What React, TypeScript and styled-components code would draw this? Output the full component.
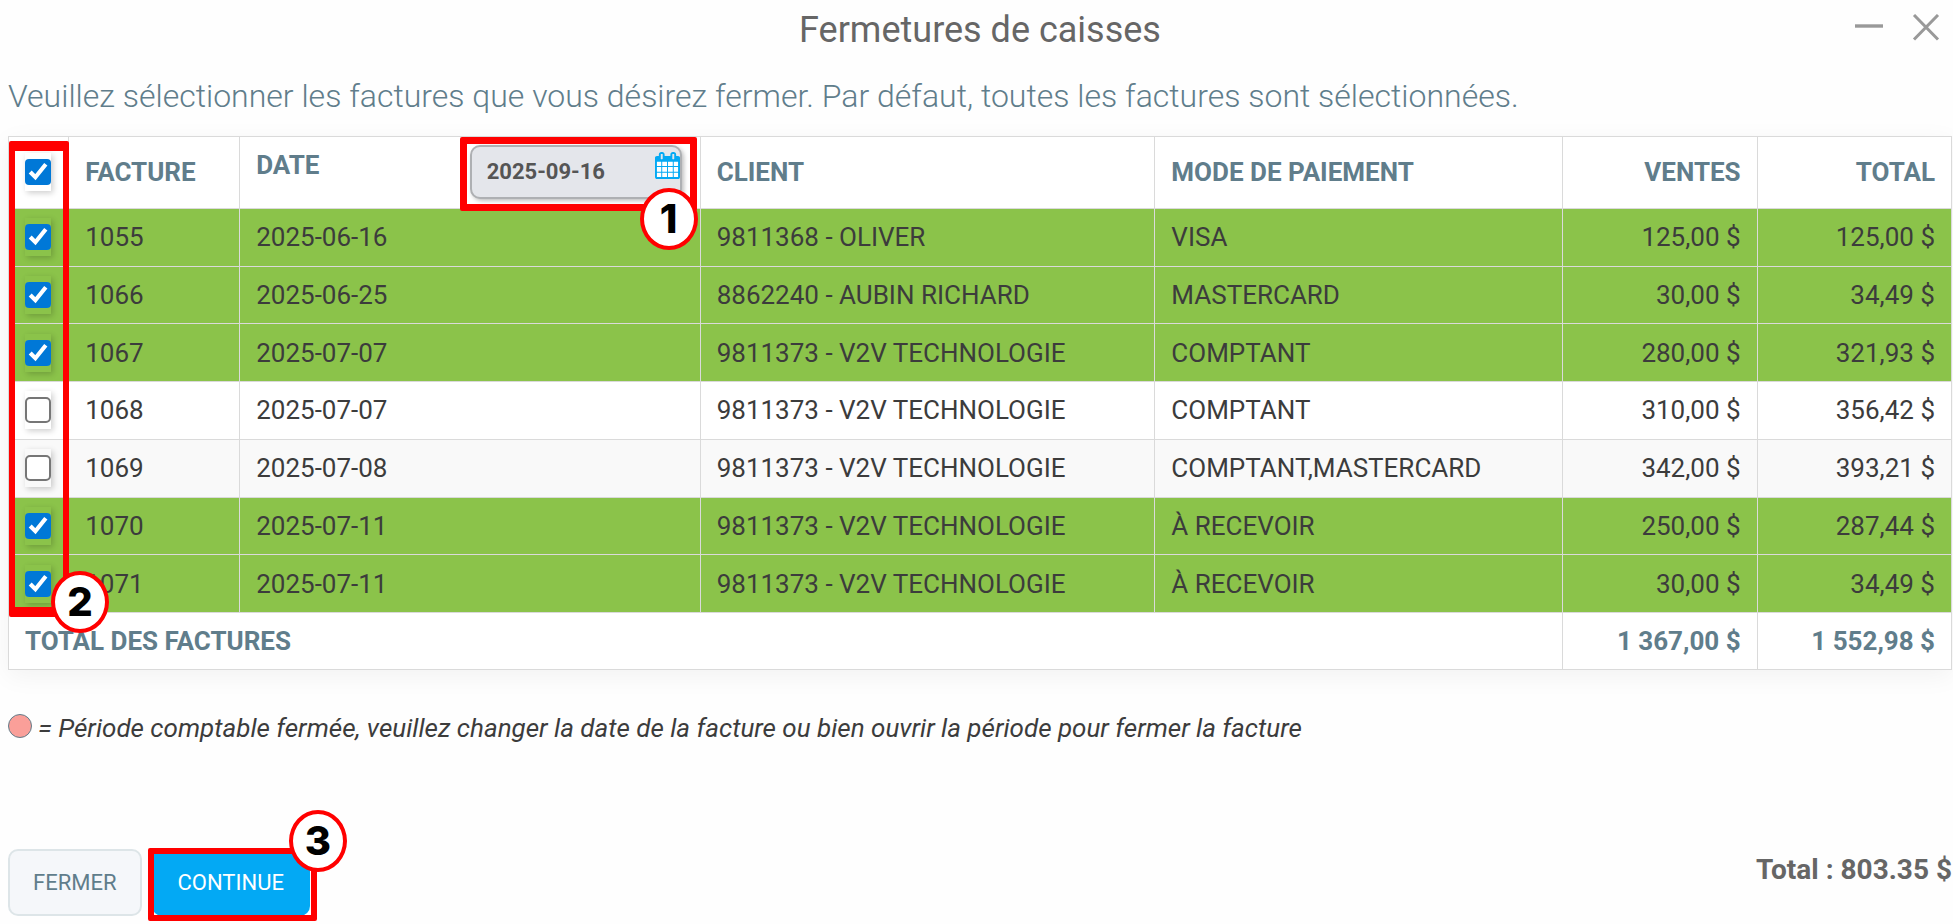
import React, { useState } from 'react';
import styled, { createGlobalStyle } from 'styled-components';

const GlobalStyle = createGlobalStyle`
  *, *::before, *::after { box-sizing: border-box; }
  body {
    margin: 0;
    background: #fefefe;
    color: #3c3c3c;
    font-family: Roboto, "Liberation Sans", sans-serif;
    font-size: 26px;
    line-height: 32px;
  }
  button, input { font-family: inherit; }
`;

const Dialog = styled.main`
  padding: 0 1px 6px 8px;
`;

const TitleBar = styled.header`
  display: grid;
  grid-template-columns: 1fr auto 1fr;
  align-items: center;
  height: 56px;
`;

const Title = styled.h1`
  grid-column: 2;
  margin: 0;
  padding-top: 4px;
  font-size: 36px;
  font-weight: 400;
  line-height: 48px;
  color: #666;
`;

const WindowActions = styled.div`
  display: flex;
  justify-content: flex-end;
  gap: 24px;
  padding-right: 7px;
`;

const IconButton = styled.button`
  display: flex;
  padding: 0;
  border: 0;
  background: none;
  color: #999;
  cursor: pointer;
`;

const Intro = styled.p`
  margin: 16px 0;
  font-size: 32px;
  font-weight: 300;
  line-height: 48px;
  color: #607d8b;
`;

const TableArea = styled.div`
  position: relative;
  box-shadow: 0 6px 24px rgba(0, 0, 0, 0.05);
`;

const Table = styled.table`
  width: 100%;
  height: 534px;
  table-layout: fixed;
  border-collapse: collapse;
  background: #fff;
  border: 1px solid #dfe8ee;
`;

const Col = styled.col<{ $width: string }>`
  width: ${(p) => p.$width};
`;

const Row = styled.tr<{ $tone?: 'selected' | 'striped' }>`
  height: 57px;
  background: ${(p) =>
    p.$tone === 'selected' ? '#8bc34a' : p.$tone === 'striped' ? '#f9f9f9' : '#fff'};
`;

const HeadRow = styled.tr`
  height: 72px;

  && > th {
    padding-bottom: 2px;
  }
`;

const Cell = styled.td<{ $align?: 'right' | 'center' }>`
  padding: 0 16px;
  border: 1px solid #dadada;
  text-align: ${(p) => p.$align ?? 'left'};
  white-space: nowrap;
`;

const CheckCell = styled(Cell)`
  padding: 0 2px 0 0;
  line-height: 0;
`;

const HeadCell = styled(Cell)`
  font-weight: 700;
  color: #607d8b;
`;

const DateHead = styled.div`
  display: flex;
  align-items: flex-start;
  justify-content: space-between;
  padding-right: 2px;
`;

const DateLabel = styled.label`
  padding-top: 4px;
`;

const DatePicker = styled.div`
  position: relative;
  width: 212px;
`;

const DateInput = styled.input`
  display: block;
  width: 100%;
  height: 54px;
  padding: 0 15px;
  border: 2px solid #aeb0b3;
  border-radius: 10px;
  background: #e4e6eb;
  box-shadow: 2px 2px 4px rgba(0, 0, 0, 0.25);
  color: #555;
  font-size: 22px;
  font-weight: 700;
`;

const CalendarButton = styled(IconButton)`
  position: absolute;
  top: 7px;
  right: 2px;
  color: #03a9f4;
`;

const Tick = styled.input`
  width: 13px;
  height: 19px;
  margin: 0;
  zoom: 2;
  accent-color: #0078d7;
  box-shadow: 1px 1px 3px rgba(0, 0, 0, 0.2);
`;

const Marker = styled.div<{ $inset: string; $border: string; $width?: string }>`
  position: absolute;
  inset: ${(p) => p.$inset};
  width: ${(p) => p.$width ?? 'auto'};
  border: solid #f00;
  border-width: ${(p) => p.$border};
  border-radius: 2px;
  pointer-events: none;
`;

const Badge = styled.span<{ $inset: string }>`
  position: absolute;
  inset: ${(p) => p.$inset};
  display: flex;
  align-items: center;
  justify-content: center;
  width: 58px;
  height: 62px;
  border: 4px solid #f00;
  border-radius: 50%;
  background: #fff;
  color: #000;
  font-family: Inter, "Liberation Sans", sans-serif;
  font-size: 40px;
  font-weight: 800;
  line-height: 48px;
  pointer-events: none;
`;

const Legend = styled.p`
  display: flex;
  align-items: center;
  gap: 6px;
  margin: 42px 0 0;
  font-style: italic;
`;

const Dot = styled.span`
  width: 24px;
  height: 24px;
  margin-bottom: 4px;
  border: 1px solid #607d8b;
  border-radius: 50%;
  background: #fa9f99;
`;

const Footer = styled.footer`
  display: flex;
  align-items: center;
  justify-content: space-between;
  margin-top: 105px;
`;

const Actions = styled.div`
  display: flex;
  gap: 10px;
`;

const Highlighted = styled.div`
  position: relative;
`;

const Button = styled.button<{ $primary?: boolean }>`
  height: 67px;
  padding: 0 ${(p) => (p.$primary ? 26 : 23)}px;
  border: ${(p) => (p.$primary ? '0' : '2px solid #dde5e8')};
  border-radius: 10px;
  background: ${(p) => (p.$primary ? '#03a9f4' : '#f5f7fa')};
  color: ${(p) => (p.$primary ? '#fff' : '#607d8b')};
  font-size: 22px;
  cursor: pointer;
`;

const GrandTotal = styled.strong`
  margin-bottom: 26px;
  font-size: 28px;
  font-weight: 700;
  color: #666;
`;

const MinimizeIcon = () => (
  <svg width="28" height="28" viewBox="0 0 28 28" aria-hidden="true">
    <path d="M0 12H28" stroke="currentColor" strokeWidth="3.4" />
  </svg>
);

const CloseIcon = () => (
  <svg width="38" height="28" viewBox="0 0 38 28" aria-hidden="true">
    <path d="M7 1L31 25.5M31 1L7 25.5" stroke="currentColor" strokeWidth="3" />
  </svg>
);

const CalendarIcon = () => (
  <svg width="25" height="27" viewBox="0 0 1664 1792" fill="currentColor" aria-hidden="true">
    <path fill="#fff" d="M64 500h1536v1228h-1536z" />
    <path d="M128 1664h288v-288h-288v288zM480 1664h320v-288h-320v288zM128 1312h288v-320h-288v320zM480 1312h320v-320h-320v320zM128 928h288v-288h-288v288zM864 1664h320v-288h-320v288zM480 928h320v-288h-320v288zM1248 1664h288v-288h-288v288zM864 1312h320v-320h-320v320zM512 448v-288q0-13-9.5-22.5t-22.5-9.5h-64q-13 0-22.5 9.5t-9.5 22.5v288q0 13 9.5 22.5t22.5 9.5h64q13 0 22.5-9.5t9.5-22.5zM1248 1312h288v-320h-288v320zM864 928h320v-288h-320v288zM1248 928h288v-288h-288v288zM1280 448v-288q0-13-9.5-22.5t-22.5-9.5h-64q-13 0-22.5 9.5t-9.5 22.5v288q0 13 9.5 22.5t22.5 9.5h64q13 0 22.5-9.5t9.5-22.5zM1664 384v1280q0 52-38 90t-90 38h-1408q-52 0-90-38t-38-90v-1280q0-52 38-90t90-38h128v-96q0-66 47-113t113-47h64q66 0 113 47t47 113v96h384v-96q0-66 47-113t113-47h64q66 0 113 47t47 113v96h128q52 0 90 38t38 90z" />
  </svg>
);

const invoices = [
  { id: '1055', date: '2025-06-16', client: '9811368 - OLIVER', mode: 'VISA', sales: '125,00 $', total: '125,00 $' },
  { id: '1066', date: '2025-06-25', client: '8862240 - AUBIN RICHARD', mode: 'MASTERCARD', sales: '30,00 $', total: '34,49 $' },
  { id: '1067', date: '2025-07-07', client: '9811373 - V2V TECHNOLOGIE', mode: 'COMPTANT', sales: '280,00 $', total: '321,93 $' },
  { id: '1068', date: '2025-07-07', client: '9811373 - V2V TECHNOLOGIE', mode: 'COMPTANT', sales: '310,00 $', total: '356,42 $' },
  { id: '1069', date: '2025-07-08', client: '9811373 - V2V TECHNOLOGIE', mode: 'COMPTANT,MASTERCARD', sales: '342,00 $', total: '393,21 $' },
  { id: '1070', date: '2025-07-11', client: '9811373 - V2V TECHNOLOGIE', mode: 'À RECEVOIR', sales: '250,00 $', total: '287,44 $' },
  { id: '1071', date: '2025-07-11', client: '9811373 - V2V TECHNOLOGIE', mode: 'À RECEVOIR', sales: '30,00 $', total: '34,49 $' },
];

const columnWidths = ['3.1%', '8.8%', '23.7%', '23.4%', '21%', '10%', '10%'];

export default function App() {
  const [selected, setSelected] = useState(['1055', '1066', '1067', '1070', '1071']);
  const [all, setAll] = useState(true);

  const toggle = (id: string) =>
    setSelected((ids) => (ids.includes(id) ? ids.filter((i) => i !== id) : [...ids, id]));

  const toggleAll = () => {
    setSelected(all ? [] : invoices.map((i) => i.id));
    setAll(!all);
  };

  return (
    <>
      <GlobalStyle />
      <Dialog>
        <TitleBar>
          <Title>Fermetures de caisses</Title>
          <WindowActions>
            <IconButton type="button" aria-label="Réduire"><MinimizeIcon /></IconButton>
            <IconButton type="button" aria-label="Fermer la fenêtre"><CloseIcon /></IconButton>
          </WindowActions>
        </TitleBar>

        <Intro>
          Veuillez sélectionner les factures que vous désirez fermer. Par défaut, toutes les factures sont
          sélectionnées.
        </Intro>

        <TableArea>
          <Table>
            <colgroup>
              {columnWidths.map((w, i) => <Col key={i} $width={w} />)}
            </colgroup>
            <thead>
              <HeadRow>
                <CheckCell as="th" $align="center">
                  <Tick type="checkbox" aria-label="Tout sélectionner" checked={all} onChange={toggleAll} />
                </CheckCell>
                <HeadCell as="th">FACTURE</HeadCell>
                <HeadCell as="th">
                  <DateHead>
                    <DateLabel htmlFor="closing-date">DATE</DateLabel>
                    <DatePicker>
                      <DateInput id="closing-date" type="text" defaultValue="2025-09-16" />
                      <CalendarButton type="button" aria-label="Choisir une date"><CalendarIcon /></CalendarButton>
                      <Marker $inset="-8px -15px -12px -10px" $border="7px" />
                      <Badge $inset="43px -16px auto auto">1</Badge>
                    </DatePicker>
                  </DateHead>
                </HeadCell>
                <HeadCell as="th">CLIENT</HeadCell>
                <HeadCell as="th">MODE DE PAIEMENT</HeadCell>
                <HeadCell as="th" $align="right">VENTES</HeadCell>
                <HeadCell as="th" $align="right">TOTAL</HeadCell>
              </HeadRow>
            </thead>
            <tbody>
              {invoices.map((inv, i) => {
                const checked = selected.includes(inv.id);
                return (
                  <Row key={inv.id} $tone={checked ? 'selected' : i % 2 === 0 ? 'striped' : undefined}>
                    <CheckCell $align="center">
                      <Tick
                        type="checkbox"
                        aria-label={`Facture ${inv.id}`}
                        checked={checked}
                        onChange={() => toggle(inv.id)}
                      />
                    </CheckCell>
                    <Cell>{inv.id}</Cell>
                    <Cell>{inv.date}</Cell>
                    <Cell>{inv.client}</Cell>
                    <Cell>{inv.mode}</Cell>
                    <Cell $align="right">{inv.sales}</Cell>
                    <Cell $align="right">{inv.total}</Cell>
                  </Row>
                );
              })}
            </tbody>
            <tfoot>
              <Row>
                <HeadCell as="th" colSpan={5}>TOTAL DES FACTURES</HeadCell>
                <HeadCell $align="right">1 367,00 $</HeadCell>
                <HeadCell $align="right">1 552,98 $</HeadCell>
              </Row>
            </tfoot>
          </Table>
          <Marker $inset="5px auto 53px 1px" $border="10px 6px" $width="60px" />
          <Badge $inset="auto auto 37px 43px">2</Badge>
        </TableArea>

        <Legend>
          <Dot />
          = Période comptable fermée, veuillez changer la date de la facture ou bien ouvrir la période pour
          fermer la facture
        </Legend>

        <Footer>
          <Actions>
            <Button type="button">FERMER</Button>
            <Highlighted>
              <Button type="button" $primary>CONTINUE</Button>
              <Marker $inset="-1px -7px -5px -4px" $border="6px" />
              <Badge $inset="-39px -37px auto auto">3</Badge>
            </Highlighted>
          </Actions>
          <GrandTotal>Total : 803.35 $</GrandTotal>
        </Footer>
      </Dialog>
    </>
  );
}
